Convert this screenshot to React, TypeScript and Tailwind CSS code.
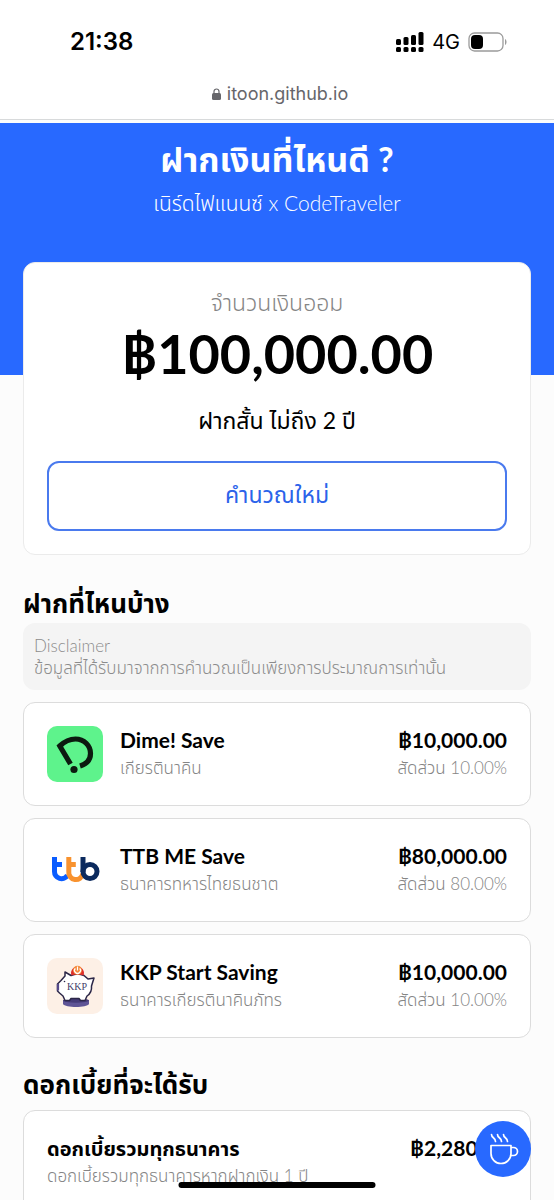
import type { ReactNode } from "react";

interface Deposit {
  name: string;
  bank: string;
  amount: string;
  share: string;
  logo: ReactNode;
}

function DimeLogo() {
  return (
    <svg viewBox="0 0 56 56" className="size-14 shrink-0" role="img" aria-label="Dime!">
      <rect width="56" height="56" rx="10" fill="#5ef38c" />
      <path
        d="M23.500 38 L12.800 20 C17.500 15.500 23 13 28.500 13 C37 13 43.500 19.500 43.500 27.500 C43.500 33.500 39.500 38 33 40"
        fill="none"
        stroke="#0c1a10"
        strokeWidth="5.200"
      />
      <circle cx="27" cy="43.500" r="3.600" fill="#0c1a10" />
    </svg>
  );
}

function TtbLogo() {
  return (
    <svg viewBox="0 0 56 56" className="size-14 shrink-0" role="img" aria-label="ttb">
      <g fill="none" strokeWidth="5">
        <path d="M7.500 15v14.500a7 7 0 0 0 13 3.800M7.500 22.500h7.500" stroke="#0a5cff" />
        <path d="M21.800 15v14.500a7 7 0 0 0 14 2M21.800 22.500h7" stroke="#f8922e" />
        <path d="M36 15v15" stroke="#0b2a5e" />
        <circle cx="43" cy="29.500" r="7" stroke="#0b2a5e" />
      </g>
    </svg>
  );
}

function KkpLogo() {
  return (
    <svg viewBox="0 0 56 56" className="size-14 shrink-0" role="img" aria-label="KKP">
      <rect width="56" height="56" rx="10" fill="#fdf0e6" />
      <path d="M16 42.500h26v3.500c-2 4-24 4-26 0z" fill="#5f5596" />
      <ellipse cx="29" cy="42.500" rx="13" ry="2.200" fill="#453b78" />
      <path
        d="M18 14l6 3.500c4-2 9-2 13 0l4 3.500 6-1-2.500 8c.5 5-1.500 8-4.500 10l-2 4.500h-4.500l-1.500-2h-8l-1.500 2h-4.500l-2-4.500-3.500-3-2-2v-7l3.500-3.500 4-4.500z"
        fill="#fff"
        stroke="#2c2748"
        strokeWidth="1.500"
        strokeLinejoin="round"
      />
      <path d="M11 26v6.500" stroke="#55498a" strokeWidth="2.200" />
      <path d="M24.500 17.500a6.500 6.500 0 1 1 12 0c-4-1.500-8-1.500-12 0z" fill="#de2f2b" />
      <circle cx="30.500" cy="12.300" r="4.500" fill="#f58a3c" />
      <path d="M30.500 8.500v4M28.300 10.300a3 3 0 1 0 4.400 0" fill="none" stroke="#fff" strokeWidth="1.200" />
      <circle cx="17.500" cy="23.500" r=".8" fill="#2c2748" />
      <text
        x="30"
        y="32"
        textAnchor="middle"
        fontSize="10"
        fill="#44406a"
        className="font-['Liberation_Serif',serif]"
      >
        KKP
      </text>
    </svg>
  );
}

const deposits: Deposit[] = [
  { name: "Dime! Save", bank: "เกียรตินาคิน", amount: "฿10,000.00", share: "สัดส่วน 10.00%", logo: <DimeLogo /> },
  { name: "TTB ME Save", bank: "ธนาคารทหารไทยธนชาต", amount: "฿80,000.00", share: "สัดส่วน 80.00%", logo: <TtbLogo /> },
  { name: "KKP Start Saving", bank: "ธนาคารเกียรตินาคินภัทร", amount: "฿10,000.00", share: "สัดส่วน 10.00%", logo: <KkpLogo /> },
];

function StatusBar() {
  return (
    <div className="flex h-[74px] items-center justify-between pt-[10px] pr-[46px] pl-[70px] font-['Inter',sans-serif] text-black">
      <time className="text-2xl font-semibold">21:38</time>
      <div className="flex items-center gap-2">
        <svg viewBox="0 0 28 20" className="h-5 w-7" role="img" aria-label="Signal">
          <rect x="0" y="7" width="5" height="6" rx="1.500" />
          <rect x="7.500" y="5" width="5" height="8" rx="1.500" />
          <rect x="15" y="3" width="5" height="10" rx="1.500" />
          <rect x="22.500" y="0" width="5" height="13" rx="1.500" />
          <rect x="0" y="15" width="5" height="5" rx="1.500" />
          <rect x="7.500" y="15" width="5" height="5" rx="1.500" />
          <rect x="15" y="15" width="5" height="5" rx="1.500" />
          <rect x="22.500" y="15" width="5" height="5" rx="1.500" />
        </svg>
        <span className="text-xl">4G</span>
        <svg viewBox="0 0 40 20" className="h-5 w-10" role="img" aria-label="Battery">
          <rect x="1" y="1" width="34" height="18" rx="5.500" fill="none" stroke="#9b9b9b" strokeWidth="1.300" />
          <rect x="3" y="3" width="12" height="14" rx="4" />
          <path d="M37 7c2 .8 2 5.200 0 6z" fill="#9b9b9b" />
        </svg>
      </div>
    </div>
  );
}

function AddressBar() {
  return (
    <div className="flex h-[45px] items-center justify-center gap-1.5 pb-1.5 pl-1.5 font-['Inter',sans-serif] text-lg text-[#66666b]">
      <svg viewBox="0 0 9 12" className="h-3 w-[9px]" aria-hidden="true">
        <rect y="5" width="9" height="7" rx="1.500" fill="currentColor" />
        <path d="M2 6V3.500a2.500 2.500 0 0 1 5 0V6" fill="none" stroke="currentColor" strokeWidth="1.200" />
      </svg>
      <span>itoon.github.io</span>
    </div>
  );
}

function DepositCard({ name, bank, amount, share, logo }: Deposit) {
  return (
    <li className="flex gap-[17px] rounded-xl border border-[#dcdcdc] bg-white p-[23px]">
      {logo}
      <div className="min-w-0 flex-1">
        <h3 className="text-[21px] leading-7 font-bold text-black">{name}</h3>
        <p className="text-[17px] leading-7 font-light text-[#858585]">{bank}</p>
      </div>
      <div className="text-right">
        <p className="text-[21px] leading-7 font-bold text-black">{amount}</p>
        <p className="text-[17px] leading-7 font-light text-[#858585]">{share}</p>
      </div>
    </li>
  );
}

export default function App() {
  return (
    <div className="h-screen overflow-hidden bg-[#fcfcfc] font-['Lato','Noto_Sans_Thai','Noto_Sans',sans-serif]">
      <div className="border-b border-[#d8dadb] bg-white">
        <StatusBar />
        <AddressBar />
      </div>

      <header className="mt-[3px] h-[252px] bg-[#2869ff] pt-[14px] text-center text-white">
        <h1 className="text-[34px] leading-[44px] font-bold">ฝากเงินที่ไหนดี ?</h1>
        <p className="mt-[6px] text-[21px] leading-8 font-light">เนิร์ดไฟแนนซ์ x CodeTraveler</p>
      </header>

      <main className="-mt-[113px] px-[23px]">
        <section className="rounded-xl border border-[#ebebeb] bg-white p-[23px] text-center">
          <p className="text-[23px] leading-8 font-light text-[#858585]">จำนวนเงินออม</p>
          <p className="text-[54px] leading-[72px] font-bold text-black">฿100,000.00</p>
          <p className="mt-[14px] text-[23px] leading-8 text-black">ฝากสั้น ไม่ถึง 2 ปี</p>
          <button
            type="button"
            className="mt-[25px] h-[70px] w-full rounded-xl border-2 border-[#4a7aee] pb-1 text-[23px] text-[#2b63ea]"
          >
            คำนวณใหม่
          </button>
        </section>

        <section className="mt-7">
          <h2 className="text-[26px] leading-10 font-bold text-black">ฝากที่ไหนบ้าง</h2>
          <div className="rounded-xl bg-[#f4f4f4] px-[11px] pt-3 pb-[11px] text-[17px] leading-[22px] font-light text-[#8c8c8c]">
            <p>Disclaimer</p>
            <p>ข้อมูลที่ได้รับมาจากการคำนวณเป็นเพียงการประมาณการเท่านั้น</p>
          </div>
          <ul className="mt-3 flex flex-col gap-3">
            {deposits.map((deposit) => (
              <DepositCard key={deposit.name} {...deposit} />
            ))}
          </ul>
        </section>

        <section className="mt-[26px]">
          <h2 className="text-[26px] leading-10 font-bold text-black">ดอกเบี้ยที่จะได้รับ</h2>
          <div className="mt-[6px] flex justify-between rounded-xl border border-[#dcdcdc] bg-white p-[23px]">
            <div>
              <h3 className="text-xl leading-7 font-bold text-black">ดอกเบี้ยรวมทุกธนาคาร</h3>
              <p className="text-[17px] leading-7 font-light text-[#858585]">ดอกเบี้ยรวมทุกธนาคารหากฝากเงิน 1 ปี</p>
            </div>
            <p className="text-[21px] leading-7 font-bold text-black">฿2,280.00</p>
          </div>
        </section>
      </main>

      <button
        type="button"
        aria-label="Buy me a coffee"
        className="fixed right-[23px] bottom-[23px] flex size-14 items-center justify-center rounded-full bg-[#2869ff] text-white"
      >
        <svg viewBox="0 0 32 32" className="size-8" fill="none" stroke="currentColor" strokeWidth="1.700" aria-hidden="true">
          <path d="M4 12.500h20v8a10 10 0 0 1-20 0z" strokeLinejoin="round" />
          <path d="M24 14.500h2.500a4 4 0 0 1 0 8H24" />
          <path d="M4.500 1.500c0 3.500 4 3 4 7M10.500 1.500c0 3.500 4 3 4 7M16.500 1.500c0 3.500 4 3 4 7" strokeLinecap="round" />
        </svg>
      </button>
      <div className="fixed bottom-3 left-1/2 h-[6px] w-[197px] -translate-x-1/2 rounded-full bg-black" />
    </div>
  );
}
